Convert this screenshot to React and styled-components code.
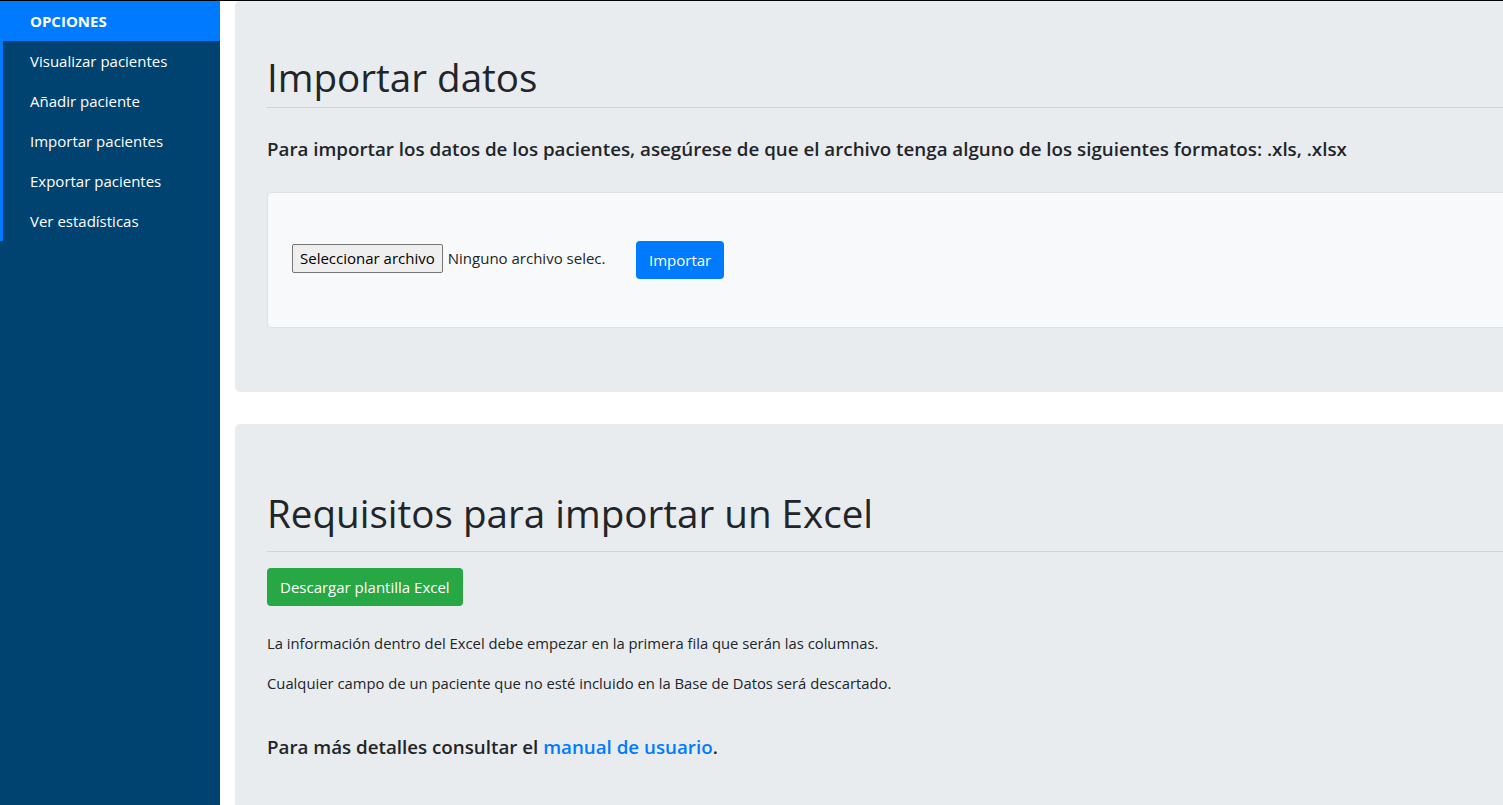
import React from "react";
import styled, { createGlobalStyle } from "styled-components";

const GlobalStyle = createGlobalStyle`
  * {
    box-sizing: border-box;
  }
  body {
    margin: 0;
    overflow: hidden;
    font-family: "Open Sans", "Liberation Sans", sans-serif;
    color: #212529;
    background: #fff;
  }
`;

const Page = styled.div`
  display: flex;
  min-height: 100vh;
  border-top: 1px solid #000;
`;

const Sidebar = styled.nav`
  flex: none;
  width: 220px;
  min-height: calc(100vh - 1px);
  background-color: #004370;
`;

const SidebarHeader = styled.div`
  display: flex;
  align-items: center;
  height: 40px;
  padding-left: 30px;
  background-color: #007bff;
  color: #fff;
  font-size: 15px;
  font-weight: 700;
`;

const SidebarList = styled.ul`
  list-style: none;
  margin: 0;
  padding: 0;
  border-left: 3px solid #007bff;
`;

const SidebarItem = styled.li`
  display: flex;
  align-items: center;
  height: 40px;
  padding-left: 27px;
  color: #fff;
  font-size: 15px;
  cursor: pointer;
`;

const Main = styled.main`
  flex: none;
  width: 1400px;
  margin-left: 15px;
`;

const Jumbotron = styled.section`
  background-color: #e9ecef;
  border-radius: 5px;
  padding: ${(p) => p.$top}px 32px 64px;
  margin-bottom: 32px;
`;

const Title = styled.h1`
  margin: 0;
  font-size: 38.6px;
  font-weight: 400;
  line-height: 45px;
`;

const Rule = styled.hr`
  margin: ${(p) => p.$top}px 0 0;
  border: 0;
  border-top: 1px solid rgba(0, 0, 0, 0.1);
`;

const Lead = styled.p`
  margin: ${(p) => p.$top}px 0 0;
  font-size: 18.75px;
  font-weight: 600;
  line-height: 28px;
`;

const Link = styled.a`
  color: #007bff;
  text-decoration: none;
`;

const UploadCard = styled.div`
  display: flex;
  align-items: center;
  height: 136px;
  margin-top: 29px;
  padding-left: 24px;
  background-color: #f8f9fa;
  border: 1px solid #dee2e6;
  border-radius: 4px;
`;

const FileInput = styled.label`
  display: flex;
  align-items: center;
  width: 344px;
  margin-bottom: 4px;
  font-size: 15px;
`;

const FileButton = styled.span`
  display: inline-flex;
  align-items: center;
  height: 29px;
  padding: 0 7px;
  margin-right: 5px;
  background-color: #efefef;
  border: 1px solid #767676;
  border-radius: 2px;
  color: #000;
`;

const Button = styled.button`
  height: 38px;
  padding: 0 ${(p) => p.$pad}px;
  margin-top: ${(p) => p.$top || 0}px;
  border: 0;
  border-radius: 4px;
  background-color: ${(p) => p.$bg};
  color: #fff;
  font-family: inherit;
  font-size: 15px;
  cursor: pointer;
`;

const Note = styled.p`
  margin: ${(p) => p.$top}px 0 0;
  font-size: 14.8px;
  line-height: 24px;
`;

const menu = [
  "Visualizar pacientes",
  "Añadir paciente",
  "Importar pacientes",
  "Exportar pacientes",
  "Ver estadísticas",
];

const App = () => {
  return (
    <>
      <GlobalStyle />
      <Page>
        <Sidebar>
          <SidebarHeader>OPCIONES</SidebarHeader>
          <SidebarList>
            {menu.map((item) => (
              <SidebarItem key={item}>{item}</SidebarItem>
            ))}
          </SidebarList>
        </Sidebar>
        <Main>
          <Jumbotron $top={54}>
            <Title>Importar datos</Title>
            <Rule $top={7} />
            <Lead $top={27}>
              Para importar los datos de los pacientes, asegúrese de que el archivo tenga alguno de los siguientes
              formatos: .xls, .xlsx
            </Lead>
            <UploadCard>
              <FileInput>
                <FileButton>Seleccionar archivo</FileButton>
                Ninguno archivo selec.
              </FileInput>
              <Button $bg="#007bff" $pad={13}>
                Importar
              </Button>
            </UploadCard>
          </Jumbotron>
          <Jumbotron $top={67}>
            <Title>Requisitos para importar un Excel</Title>
            <Rule $top={15} />
            <Button $bg="#28a745" $pad={13} $top={16}>
              Descargar plantilla Excel
            </Button>
            <Note $top={25}>La información dentro del Excel debe empezar en la primera fila que serán las columnas.</Note>
            <Note $top={16}>Cualquier campo de un paciente que no esté incluido en la Base de Datos será descartado.</Note>
            <Lead $top={38}>
              Para más detalles consultar el <Link href="#">manual de usuario</Link>.
            </Lead>
          </Jumbotron>
        </Main>
      </Page>
    </>
  );
};

export default App;
